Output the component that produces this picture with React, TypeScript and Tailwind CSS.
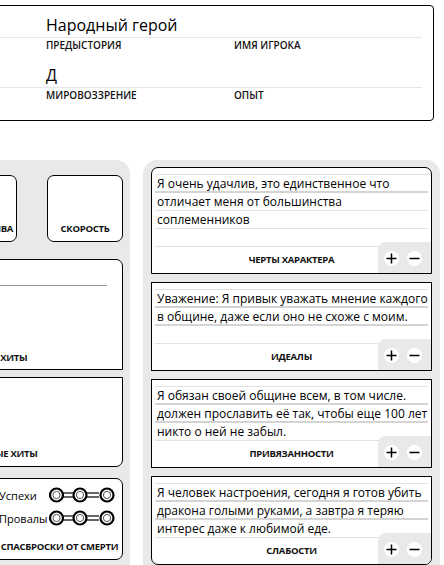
import { ReactNode } from 'react';

type Trait = {
  title: string;
  lines: string[];
  rows: number;
  thick: number[];
  rounded?: 'top' | 'bottom';
};

const traits: Trait[] = [
  {
    title: 'Черты характера',
    lines: ['Я очень удачлив, это единственное что', 'отличает меня от большинства', 'соплеменников'],
    rows: 4,
    thick: [0],
    rounded: 'top',
  },
  {
    title: 'Идеалы',
    lines: ['Уважение: Я привык уважать мнение каждого', 'в общине, даже если оно не схоже с моим.'],
    rows: 3,
    thick: [0, 1],
  },
  {
    title: 'Привязанности',
    lines: ['Я обязан своей общине всем, в том числе.', 'должен прославить её так, чтобы еще 100 лет', 'никто о ней не забыл.'],
    rows: 3,
    thick: [0, 1],
  },
  {
    title: 'Слабости',
    lines: ['Я человек настроения, сегодня я готов убить', 'дракона голыми руками, а завтра я теряю', 'интерес даже к любимой еде.'],
    rows: 3,
    thick: [0, 1],
    rounded: 'bottom',
  },
];

function Field({ value, label }: { value?: string; label?: string }) {
  return (
    <div>
      <div className="h-[24px] border-b border-[#e6e6e6] text-[16px] leading-[23px]">{value}</div>
      <div className="h-[14px] text-[10px] font-semibold uppercase leading-[14px] text-[#111]">{label}</div>
    </div>
  );
}

function Label({ children }: { children: ReactNode }) {
  return (
    <div className="text-center text-[9.5px] font-bold uppercase leading-[12px] tracking-[-0.03em] text-[#111]">
      {children}
    </div>
  );
}

function Dots() {
  return (
    <svg width="68" height="16" viewBox="0 0 68 16">
      {[14, 38].map((x) => (
        <g key={x}>
          <line x1={x} y1="6" x2={x + 12} y2="6" stroke="#000" strokeWidth="1.2" />
          <line x1={x} y1="10" x2={x + 12} y2="10" stroke="#000" strokeWidth="1.2" />
        </g>
      ))}
      {[7.5, 31, 58].map((cx) => (
        <g key={cx}>
          <circle cx={cx} cy="8" r="6.5" fill="#fff" stroke="#000" strokeWidth="2.2" />
          <circle cx={cx} cy="8" r="3.6" fill="#fff" stroke="#555" strokeWidth="1" />
        </g>
      ))}
    </svg>
  );
}

function TraitCard({ trait }: { trait: Trait }) {
  const corner =
    trait.rounded === 'top' ? 'rounded-t-[7px]' : trait.rounded === 'bottom' ? 'rounded-b-[7px]' : '';
  return (
    <div className={`relative overflow-hidden border border-black bg-white px-[3px] pt-[6px] ${corner}`}>
      <div className="border-t border-[#e2e2e2]">
        {Array.from({ length: trait.rows }).map((_, i) => (
          <div
            key={i}
            className={`h-[18px] pl-[2px] text-[12px] leading-[17px] whitespace-nowrap ${
              trait.thick.includes(i) ? 'border-b-2 border-[#d4d4d4]' : 'border-b border-[#e2e2e2]'
            }`}
          >
            {trait.lines[i]}
          </div>
        ))}
      </div>
      <div className="flex h-[26px] items-center justify-center">
        <Label>{trait.title}</Label>
      </div>
      <div className="absolute right-0 bottom-0 flex h-[31px] w-[53px] items-end gap-[8px] rounded-tl-[8px] bg-[#e9e9e9] pb-[7px] pl-[6px]">
        <button className="flex h-[15px] w-[15px] items-center justify-center rounded-full bg-white">
          <svg width="11" height="11" viewBox="0 0 11 11">
            <path d="M5.5 0.5v10M0.5 5.5h10" stroke="#000" strokeWidth="1.5" />
          </svg>
        </button>
        <button className="flex h-[15px] w-[15px] items-center justify-center rounded-full bg-white">
          <svg width="11" height="11" viewBox="0 0 11 11">
            <path d="M0.5 5.5h10" stroke="#000" strokeWidth="1.5" />
          </svg>
        </button>
      </div>
    </div>
  );
}

export default function App() {
  return (
    <div className="h-[565px] w-[444px] overflow-hidden bg-white font-['Open_Sans',sans-serif] text-black">
      <div className="pt-[5px]">
        <div className="ml-[-151px] w-[585px] rounded-[4px] border border-black pt-[8px] pb-[18px] pl-[8px]">
          <div className="grid grid-cols-[188px_188px_188px] gap-y-[12px]">
            <Field />
            <Field value="Народный герой" label="Предыстория" />
            <Field label="Имя игрока" />
            <Field />
            <Field value="Д" label="Мировоззрение" />
            <Field label="Опыт" />
          </div>
        </div>
      </div>

      <div className="mt-[39px] flex items-start gap-[13px]">
        <div className="ml-[-142px] h-[420px] w-[272px] shrink-0 rounded-tr-[14px] bg-[#e9e9e9] pt-[15px] pr-[7px] pl-[7px]">
          <div className="flex justify-end gap-[30px]">
            <div className="flex h-[67px] w-[76px] flex-col justify-end rounded-[7px] border border-black bg-white pb-[6px]">
              <Label>Инициатива</Label>
            </div>
            <div className="flex h-[67px] w-[76px] flex-col justify-end rounded-[7px] border border-black bg-white pb-[6px]">
              <Label>Скорость</Label>
            </div>
          </div>

          <div className="mt-[17px] flex h-[111px] flex-col rounded-t-[7px] border border-black bg-white pt-[25px] pr-[15px]">
            <div className="border-t border-[#999]" />
            <div className="mt-auto pb-[5px] pl-[7px]">
              <Label>Текущие хиты</Label>
            </div>
          </div>

          <div className="mt-[7px] flex h-[90px] flex-col justify-end rounded-b-[7px] border border-black bg-white pb-[6px]">
            <Label>Временные хиты</Label>
          </div>

          <div className="mt-[11px] flex gap-[8px]">
            <div className="h-[82px] flex-1 rounded-[7px] border border-black bg-white" />
            <div className="flex h-[82px] w-[131px] flex-col rounded-[7px] border border-black bg-white pt-[8px]">
              <div className="flex items-center justify-between pr-[5px] pl-[6px]">
                <span className="text-[11px] leading-[15px]">Успехи</span>
                <Dots />
              </div>
              <div className="mt-[7px] flex items-center justify-between pr-[5px] pl-[6px]">
                <span className="text-[11px] leading-[15px]">Провалы</span>
                <Dots />
              </div>
              <div className="mt-auto pb-[6px] pl-[4px]">
                <Label>Спасброски от смерти</Label>
              </div>
            </div>
          </div>
        </div>

        <div className="flex w-[297px] shrink-0 flex-col gap-[8px] rounded-t-[14px] bg-[#e9e9e9] px-[8px] pt-[7px] pb-[8px]">
          {traits.map((t) => (
            <TraitCard key={t.title} trait={t} />
          ))}
        </div>
      </div>
    </div>
  );
}
